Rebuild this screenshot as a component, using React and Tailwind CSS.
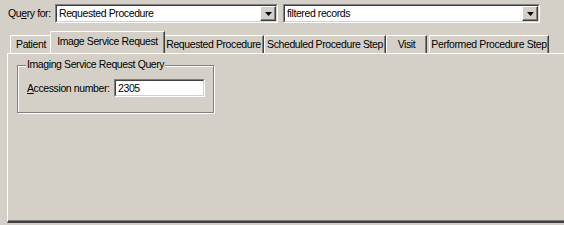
import React from "react";

const font = { fontFamily: '"Liberation Sans", Arial, sans-serif', letterSpacing: "-0.4px" };

function Arrow() {
  return (
    <div className="w-[16px] h-[15px] shrink-0 bg-[#d4d0c8] border border-t-white border-l-white border-r-[#404040] border-b-[#404040] flex items-center justify-center shadow-[inset_-1px_-1px_0_#808080]">
      <svg width="7" height="4" viewBox="0 0 7 4"><path d="M0 0h7L3.5 4z" fill="#000" /></svg>
    </div>
  );
}

function Combo({ w, text }) {
  return (
    <div className={`h-[19px] shrink-0 ${w} border border-t-[#808080] border-l-[#808080] border-r-white border-b-white`}>
      <div className="h-full w-full bg-white border border-t-[#404040] border-l-[#404040] border-r-[#d4d0c8] border-b-[#d4d0c8] flex items-center pl-[2px] pr-0">
        <span className="flex-1 text-[10.5px] text-black leading-none whitespace-nowrap">{text}</span>
        <Arrow />
      </div>
    </div>
  );
}

function Tab({ w, label, sel }) {
  if (sel) {
    return (
      <div className={`${w} shrink-0 h-[22px] -mx-[2px] relative z-10 bg-[#d4d0c8] border-t border-l border-t-white border-l-white border-r border-r-[#404040] shadow-[inset_-1px_0_0_#808080] flex items-start justify-center pt-[4px] text-[10.5px] text-black leading-none whitespace-nowrap rounded-tl-[2px]`}>
        {label}
      </div>
    );
  }
  return (
    <div className={`${w} shrink-0 h-[18px] bg-[#d4d0c8] border-t border-l border-t-white border-l-white border-r border-r-[#404040] shadow-[inset_-1px_0_0_#808080] flex items-start justify-center pt-[3px] text-[10.5px] text-black leading-none whitespace-nowrap rounded-tl-[2px]`}>
      {label}
    </div>
  );
}

export default function App() {
  return (
    <div style={font} className="w-[564px] h-[225px] bg-[#d4d0c8] overflow-hidden flex flex-col">
      <div className="flex items-center h-[19px] mt-[4px]">
        <span className="ml-[8px] w-[47px] shrink-0 text-[10.5px] text-black leading-none whitespace-nowrap">Qu<span className="underline">e</span>ry for:</span>
        <Combo w="w-[223px]" text="Requested Procedure" />
        <div className="w-[5px] shrink-0" />
        <Combo w="w-[257px]" text="filtered records" />
      </div>
      <div className="flex items-end h-[22px] mt-[8px] pl-[10px]">
        <Tab w="w-[42px]" label="Patient" />
        <Tab w="w-[115px]" label="Image Service Request" sel />
        <Tab w="w-[101px]" label="Requested Procedure" />
        <Tab w="w-[122px]" label="Scheduled Procedure Step" />
        <Tab w="w-[41px]" label="Visit" />
        <div className="w-[2px] shrink-0" />
        <Tab w="w-[120px]" label="Performed Procedure Step" />
      </div>
      <div className="ml-[7px] flex-1 mb-[2px] bg-[#d4d0c8] border-t border-l border-t-white border-l-white border-b-2 border-b-[#404040] shadow-[inset_0_-1px_0_#808080] flex flex-col">
        <div className="ml-[9px] mt-[11px] w-[197px] h-[48px] border border-[#808080] shadow-[1px_1px_0_#fff,inset_1px_1px_0_#fff] relative">
          <span className="absolute left-[8px] -top-[7px] bg-[#d4d0c8] px-[1px] text-[10.5px] leading-none text-black whitespace-nowrap">Imaging Service Request Query</span>
          <div className="flex items-center mt-[13px] ml-[9px]">
            <span className="w-[87px] shrink-0 text-[10.5px] text-black leading-none whitespace-nowrap"><span className="underline">A</span>ccession number:</span>
            <div className="w-[91px] h-[18px] shrink-0 border border-t-[#808080] border-l-[#808080] border-r-white border-b-white">
              <div className="w-full h-full bg-white border border-t-[#404040] border-l-[#404040] border-r-[#d4d0c8] border-b-[#d4d0c8] flex items-center pl-[2px] text-[10.5px] leading-none text-black">2305</div>
            </div>
          </div>
        </div>
      </div>
    </div>
  );
}
